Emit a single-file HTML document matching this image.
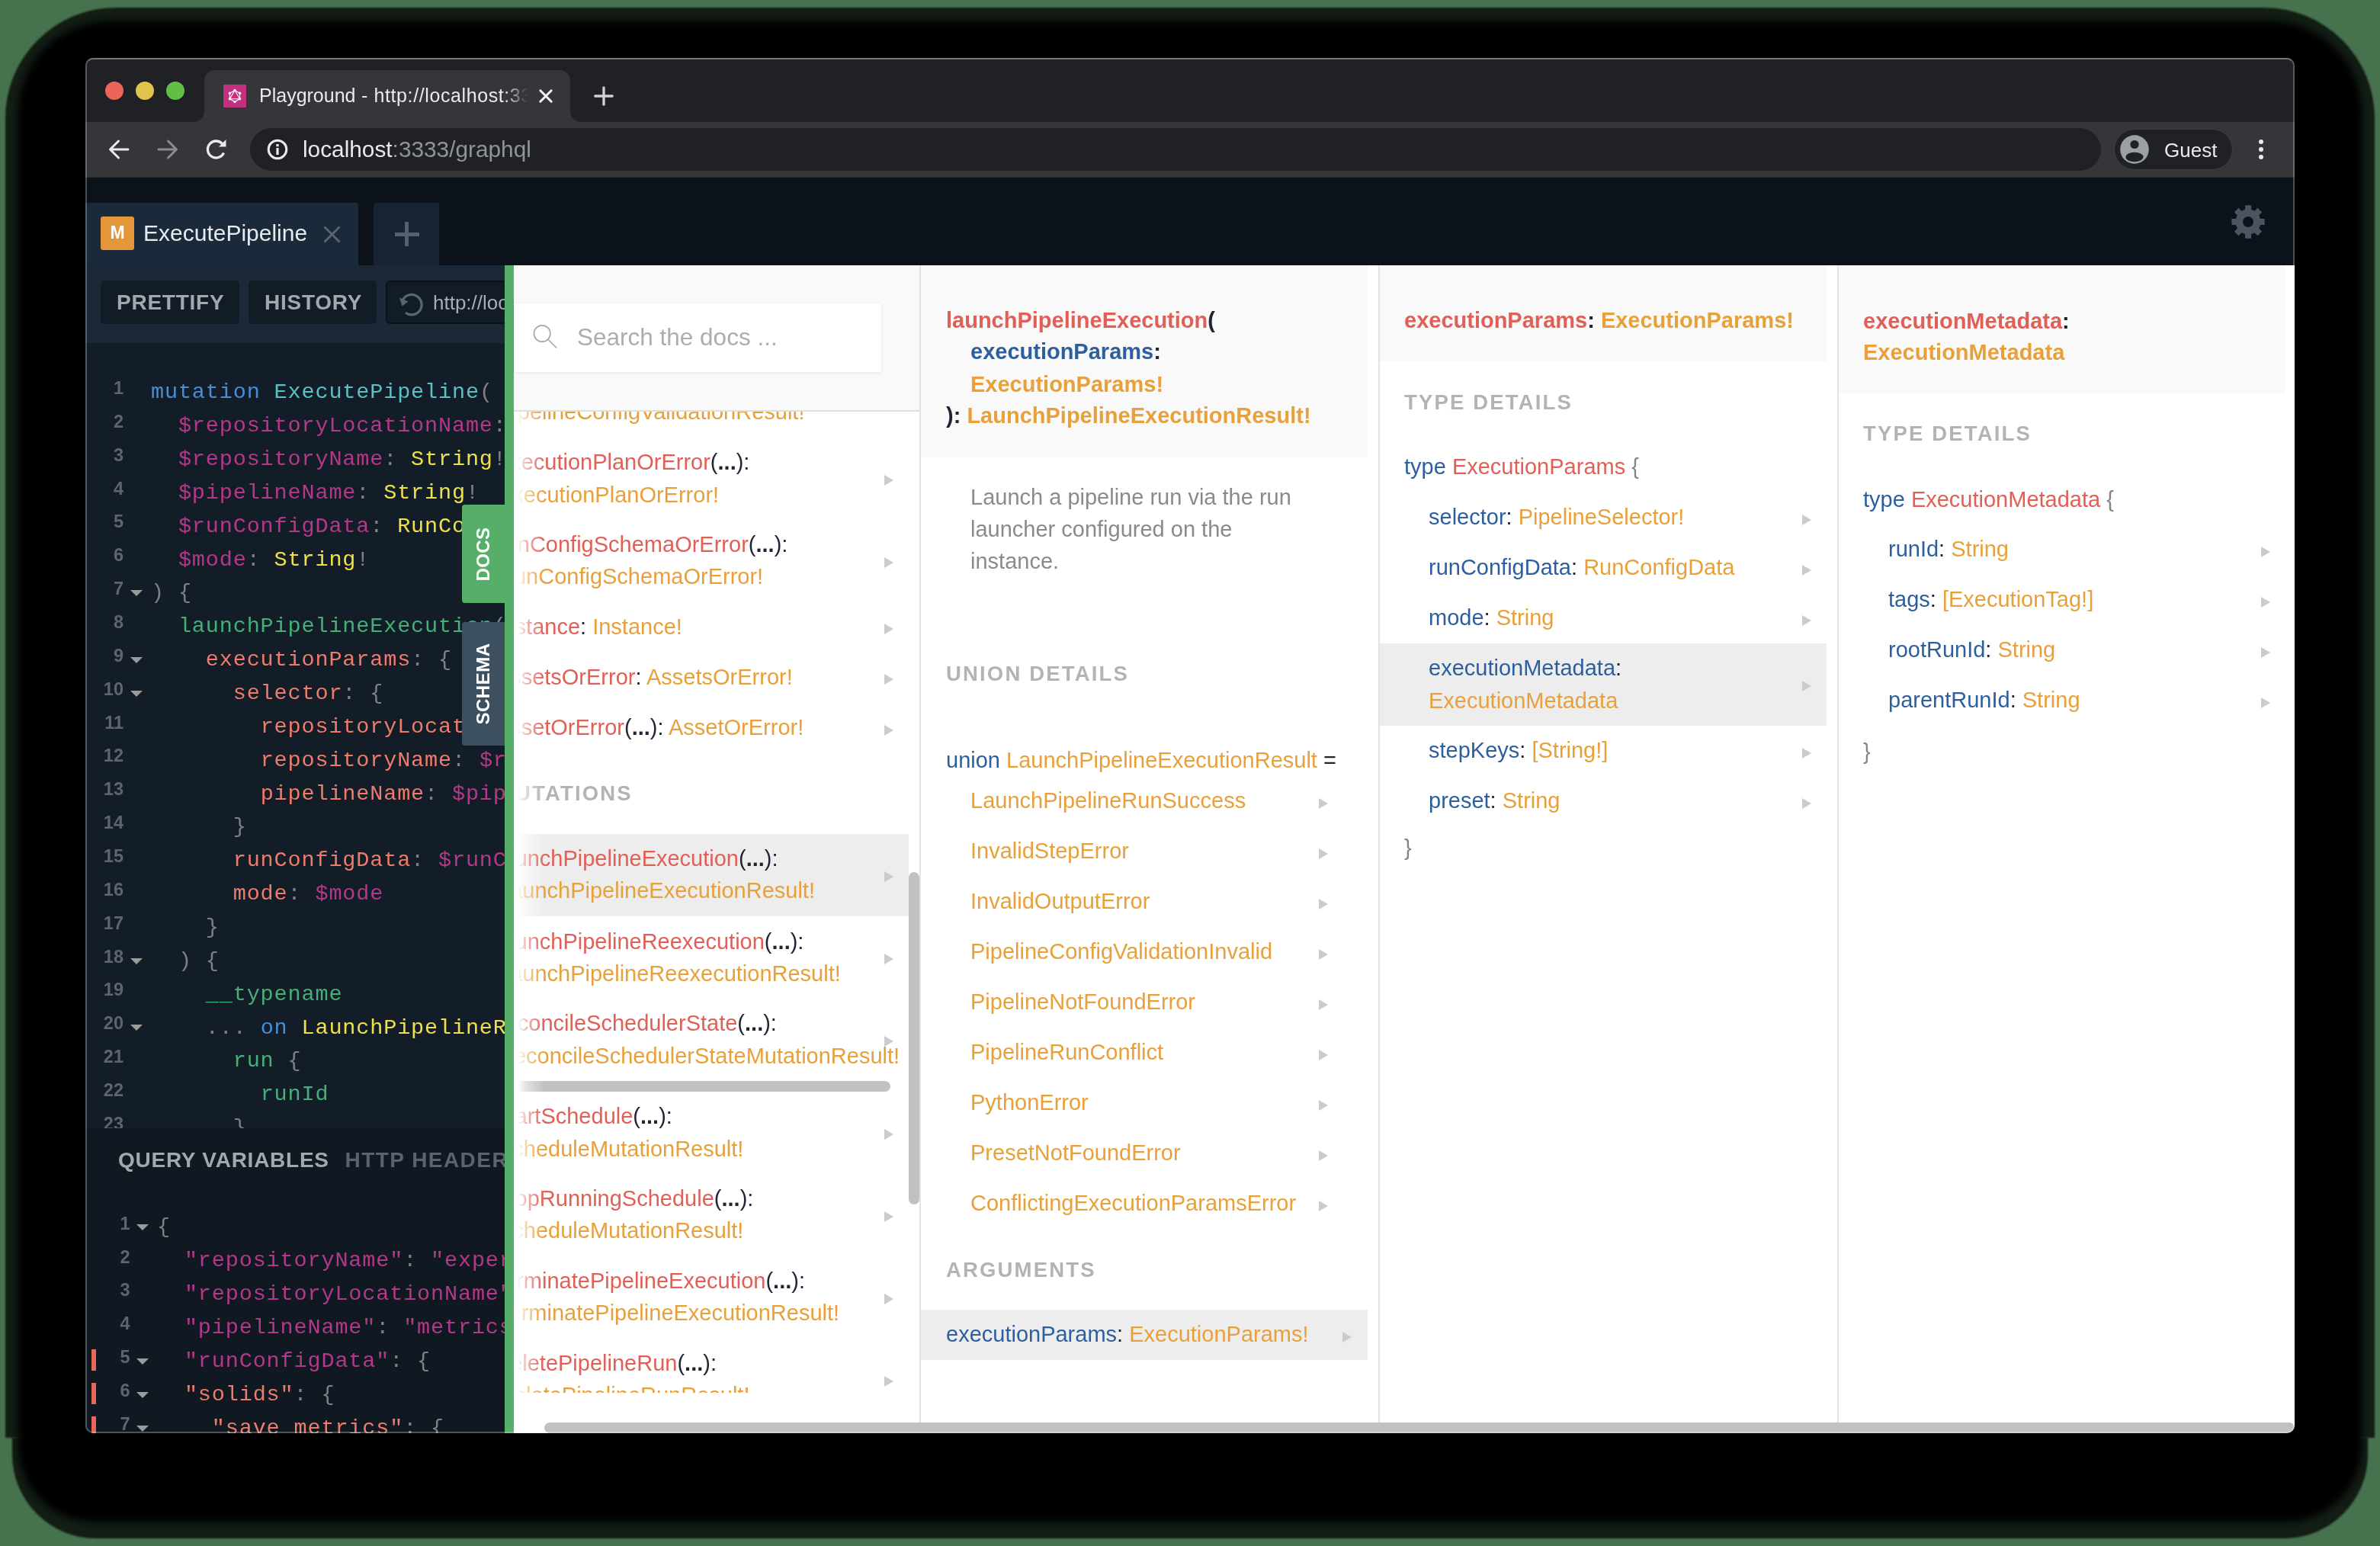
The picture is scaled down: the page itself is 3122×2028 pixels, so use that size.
<!DOCTYPE html>
<html><head><meta charset="utf-8"><title>Playground</title>
<style>
html,body{margin:0;padding:0;}
body{width:3122px;height:2028px;position:relative;overflow:hidden;background:#47724e;font-family:'Liberation Sans', sans-serif;}
</style></head><body>
<div style="position:absolute;left:7px;top:10px;width:3108px;height:1876px;border-radius:145px 145px 0 0;background:rgba(0,0,0,0.74);filter:blur(1px)"></div>
<div style="position:absolute;left:16px;top:1886px;width:3090px;height:132px;border-radius:0 0 110px 110px;background:rgba(0,0,0,0.74);filter:blur(1px)"></div>
<div style="position:absolute;left:24px;top:28px;width:3074px;height:1968px;border-radius:120px 120px 100px 100px;background:#000;filter:blur(5px)"></div>
<div style="position:absolute;left:112px;top:76px;width:2898px;height:1804px;border-radius:10px;overflow:hidden;background:#202124">
<div style="position:absolute;left:-112px;top:-76px;width:3122px;height:2028px;will-change:transform">
<div style="position:absolute;left:112px;top:76px;width:2898px;height:84px;background:#202124;"></div>
<div style="position:absolute;left:268px;top:92px;width:480px;height:68px;background:#35363a;border-radius:14px 14px 0 0"></div>
<div style="position:absolute;left:254px;top:146px;width:14px;height:14px;background:#35363a;"></div>
<div style="position:absolute;left:254px;top:146px;width:14px;height:14px;background:#202124;border-bottom-right-radius:14px"></div>
<div style="position:absolute;left:748px;top:146px;width:14px;height:14px;background:#35363a;"></div>
<div style="position:absolute;left:748px;top:146px;width:14px;height:14px;background:#202124;border-bottom-left-radius:14px"></div>
<div style="position:absolute;left:138px;top:107px;width:24px;height:24px;background:#ec6559;border-radius:50%"></div>
<div style="position:absolute;left:178px;top:107px;width:24px;height:24px;background:#e0c34a;border-radius:50%"></div>
<div style="position:absolute;left:218px;top:107px;width:24px;height:24px;background:#64bd46;border-radius:50%"></div>
<svg style="position:absolute;left:293px;top:111px" width="30" height="30" viewBox="0 0 30 30">
<rect width="30" height="30" fill="#c2307f"/>
<g stroke="#fff" stroke-width="1.1" fill="none"><polygon points="15.00,7.40 21.58,11.20 21.58,18.80 15.00,22.60 8.42,18.80 8.42,11.20"/><polygon points="15.00,7.40 21.58,18.80 8.42,18.80"/></g>
<g fill="#fff"><circle cx="15.00" cy="7.40" r="1.7"/><circle cx="21.58" cy="11.20" r="1.7"/><circle cx="21.58" cy="18.80" r="1.7"/><circle cx="15.00" cy="22.60" r="1.7"/><circle cx="8.42" cy="18.80" r="1.7"/><circle cx="8.42" cy="11.20" r="1.7"/></g></svg>
<div style="position:absolute;left:340px;top:100px;width:375px;height:50px;overflow:hidden;-webkit-mask-image:linear-gradient(to right,#000 322px,transparent 352px)">
<div style="position:absolute;left:-340px;top:-100px;width:1000px;height:200px">
<div style="position:absolute;left:340px;top:113.35px;font-family:Liberation Sans,sans-serif;font-size:25px;line-height:25px;white-space:pre;color:#e8eaed">Playground<span style="letter-spacing:0.6px"> - http://localhost:3333/graphql</span></div>
</div></div>
<svg style="position:absolute;left:704px;top:114px" width="24" height="24" viewBox="0 0 24 24"><path d="M4.8 4.8 L19.2 19.2 M19.2 4.8 L4.8 19.2" stroke="#f1f3f4" stroke-width="3" stroke-linecap="round"/></svg>
<svg style="position:absolute;left:779px;top:113px" width="26" height="26" viewBox="0 0 26 26"><path d="M13 1.8 V24.2 M1.8 13 H24.2" stroke="#d0d2d5" stroke-width="3.3" stroke-linecap="round"/></svg>
<div style="position:absolute;left:112px;top:160px;width:2898px;height:73px;background:#35363a;"></div>
<div style="position:absolute;left:112px;top:232px;width:2898px;height:1px;background:#2b2c30;"></div>
<svg style="position:absolute;left:140px;top:180px" width="32" height="32" viewBox="0 0 32 32"><path d="M28 16 H5 M15.5 5 L4.5 16 L15.5 27" stroke="#e8eaed" stroke-width="3" fill="none" stroke-linecap="round" stroke-linejoin="round"/></svg>
<svg style="position:absolute;left:204px;top:180px" width="32" height="32" viewBox="0 0 32 32"><path d="M4 16 H27 M16.5 5 L27.5 16 L16.5 27" stroke="#8b8c8f" stroke-width="3" fill="none" stroke-linecap="round" stroke-linejoin="round"/></svg>
<svg style="position:absolute;left:268px;top:180px" width="32" height="32" viewBox="0 0 32 32">
<path d="M25.5 20.5 A11 11 0 1 1 23.5 8.5" stroke="#e8eaed" stroke-width="3.3" fill="none"/>
<path d="M19 12.5 L28.5 12.5 L28.5 3 Z" fill="#e8eaed"/></svg>
<div style="position:absolute;left:328px;top:168px;width:2428px;height:56px;background:#202124;border-radius:28px"></div>
<svg style="position:absolute;left:349px;top:181px" width="30" height="30" viewBox="0 0 30 30">
<circle cx="15" cy="15" r="11.8" stroke="#e8eaed" stroke-width="3" fill="none"/>
<rect x="13.4" y="13" width="3.2" height="9" fill="#e8eaed"/><rect x="13.4" y="8" width="3.2" height="3.2" fill="#e8eaed"/></svg>
<div style="position:absolute;left:397.0px;top:180.9px;font-family:'Liberation Sans', sans-serif;font-size:29.8px;line-height:29.8px;font-weight:400;white-space:pre;"><span style="color:#e8eaed">localhost</span><span style="color:#909398">:3333/graphql</span></div>
<div style="position:absolute;left:2773px;top:169px;width:156px;height:54px;background:#202124;border-radius:27px;box-sizing:border-box;border:1.5px solid #3d3e42"></div>
<svg style="position:absolute;left:2781px;top:177px" width="38" height="38" viewBox="0 0 38 38">
<defs><clipPath id="av"><circle cx="19" cy="19" r="18.8"/></clipPath></defs>
<circle cx="19" cy="19" r="18.8" fill="#9aa0a6"/>
<g clip-path="url(#av)" fill="#202124"><circle cx="19" cy="12.5" r="5.6"/><ellipse cx="19" cy="29" rx="11.5" ry="6.2"/></g></svg>
<div style="position:absolute;left:2839.0px;top:183.8px;font-family:'Liberation Sans', sans-serif;font-size:26px;line-height:26px;font-weight:400;white-space:pre;"><span style="color:#e8eaed">Guest</span></div>
<div style="position:absolute;left:2962.7px;top:182.60000000000002px;width:6.4px;height:6.4px;background:#e8eaed;border-radius:50%"></div>
<div style="position:absolute;left:2962.7px;top:192.70000000000002px;width:6.4px;height:6.4px;background:#e8eaed;border-radius:50%"></div>
<div style="position:absolute;left:2962.7px;top:202.8px;width:6.4px;height:6.4px;background:#e8eaed;border-radius:50%"></div>
<div style="position:absolute;left:112px;top:233px;width:2898px;height:115px;background:#0b1219;"></div>
<div style="position:absolute;left:112px;top:266px;width:358px;height:82px;background:#1b2a3a;border-top-right-radius:3px"></div>
<div style="position:absolute;left:132px;top:284px;width:44px;height:44px;background:#e3963a;border-radius:3px"></div>
<div style="position:absolute;left:144.5px;top:294.4px;font-family:'Liberation Sans', sans-serif;font-size:23px;line-height:23px;font-weight:700;white-space:pre;"><span style="color:#ffffff">M</span></div>
<div style="position:absolute;left:188.0px;top:290.5px;font-family:'Liberation Sans', sans-serif;font-size:30px;line-height:30px;font-weight:400;white-space:pre;"><span style="color:#e8ebee">ExecutePipeline</span></div>
<svg style="position:absolute;left:424px;top:296px" width="23" height="23" viewBox="0 0 23 23"><path d="M1.5 1.5 L21.5 21.5 M21.5 1.5 L1.5 21.5" stroke="#5d6670" stroke-width="2.6"/></svg>
<div style="position:absolute;left:490px;top:266px;width:86px;height:82px;background:#172331;border-radius:3px 3px 0 0"></div>
<div style="position:absolute;left:517.5px;top:304.5px;width:32px;height:5px;background:#56616d;"></div>
<div style="position:absolute;left:531px;top:291px;width:5px;height:32px;background:#56616d;"></div>
<svg style="position:absolute;left:0;top:0" width="3122" height="400"><polygon points="2945.00,275.51 2945.00,269.37 2953.00,269.37 2953.00,275.51 2957.13,277.22 2961.47,272.87 2967.13,278.53 2962.78,282.87 2964.49,287.00 2970.63,287.00 2970.63,295.00 2964.49,295.00 2962.78,299.13 2967.13,303.47 2961.47,309.13 2957.13,304.78 2953.00,306.49 2953.00,312.63 2945.00,312.63 2945.00,306.49 2940.87,304.78 2936.53,309.13 2930.87,303.47 2935.22,299.13 2933.51,295.00 2927.37,295.00 2927.37,287.00 2933.51,287.00 2935.22,282.87 2930.87,278.53 2936.53,272.87 2940.87,277.22" fill="#4a5561"/><circle cx="2949" cy="291" r="16.5" fill="#4a5561"/><circle cx="2949" cy="291" r="7" fill="#0b1219"/></svg>
<div style="position:absolute;left:112px;top:348px;width:550px;height:102px;background:#1b2838;"></div>
<div style="position:absolute;left:132px;top:368px;width:182px;height:57px;background:#121c27;border-radius:5px"></div>
<div style="position:absolute;left:153.0px;top:382.7px;font-family:'Liberation Sans', sans-serif;font-size:28px;line-height:28px;font-weight:700;white-space:pre;letter-spacing:0.75px"><span style="color:#a3a8ae">PRETTIFY</span></div>
<div style="position:absolute;left:326px;top:368px;width:168px;height:57px;background:#121c27;border-radius:5px"></div>
<div style="position:absolute;left:347.0px;top:382.7px;font-family:'Liberation Sans', sans-serif;font-size:28px;line-height:28px;font-weight:700;white-space:pre;letter-spacing:0.75px"><span style="color:#a3a8ae">HISTORY</span></div>
<div style="position:absolute;left:506px;top:368px;width:400px;height:57px;background:#121c27;border-radius:6px;box-sizing:border-box;border:2px solid #0a1118"></div>
<svg style="position:absolute;left:520px;top:380px" width="36" height="36" viewBox="0 0 36 36">
<path d="M8.2 13.5 A13.2 13.2 0 1 1 12 30.3" stroke="#5c6671" stroke-width="3.2" fill="none"/>
<path d="M4 10.5 L7.5 21.5 L15.5 15.5 Z" fill="#5c6671"/></svg>
<div style="position:absolute;left:568.0px;top:383.9px;font-family:'Liberation Sans', sans-serif;font-size:26px;line-height:26px;font-weight:400;white-space:pre;"><span style="color:#a9adb2">http://localhost:3333/graphql</span></div>
<div style="position:absolute;left:112px;top:450px;width:550px;height:1030px;background:#131d28;"></div>
<div style="position:absolute;left:112px;top:450px;width:550px;height:1030px;overflow:hidden">
<div style="position:absolute;left:-112px;top:-450px;width:1000px;height:2000px">
<div style="position:absolute;left:198.0px;top:501.2px;font-family:'Liberation Mono', monospace;font-size:28.5px;line-height:28.5px;font-weight:400;white-space:pre;letter-spacing:0.85px"><span style="color:#4a8cd6">mutation</span><span style="color:#7b8189"> </span><span style="color:#58c2c5">ExecutePipeline</span><span style="color:#7b8189">(</span></div>
<div style="position:absolute;left:112.0px;top:497.9px;font-family:'Liberation Sans', sans-serif;font-size:23.5px;line-height:23.5px;font-weight:700;white-space:pre;width:50px;text-align:right"><span style="color:#5c6570">1</span></div>
<div style="position:absolute;left:198.0px;top:545.1px;font-family:'Liberation Mono', monospace;font-size:28.5px;line-height:28.5px;font-weight:400;white-space:pre;letter-spacing:0.85px"><span style="color:#7b8189">  </span><span style="color:#b3388a">$repositoryLocationName</span><span style="color:#7b8189">: </span><span style="color:#efe04a">String</span><span style="color:#7b8189">!</span></div>
<div style="position:absolute;left:112.0px;top:541.8px;font-family:'Liberation Sans', sans-serif;font-size:23.5px;line-height:23.5px;font-weight:700;white-space:pre;width:50px;text-align:right"><span style="color:#5c6570">2</span></div>
<div style="position:absolute;left:198.0px;top:589.0px;font-family:'Liberation Mono', monospace;font-size:28.5px;line-height:28.5px;font-weight:400;white-space:pre;letter-spacing:0.85px"><span style="color:#7b8189">  </span><span style="color:#b3388a">$repositoryName</span><span style="color:#7b8189">: </span><span style="color:#efe04a">String</span><span style="color:#7b8189">!</span></div>
<div style="position:absolute;left:112.0px;top:585.6px;font-family:'Liberation Sans', sans-serif;font-size:23.5px;line-height:23.5px;font-weight:700;white-space:pre;width:50px;text-align:right"><span style="color:#5c6570">3</span></div>
<div style="position:absolute;left:198.0px;top:632.8px;font-family:'Liberation Mono', monospace;font-size:28.5px;line-height:28.5px;font-weight:400;white-space:pre;letter-spacing:0.85px"><span style="color:#7b8189">  </span><span style="color:#b3388a">$pipelineName</span><span style="color:#7b8189">: </span><span style="color:#efe04a">String</span><span style="color:#7b8189">!</span></div>
<div style="position:absolute;left:112.0px;top:629.5px;font-family:'Liberation Sans', sans-serif;font-size:23.5px;line-height:23.5px;font-weight:700;white-space:pre;width:50px;text-align:right"><span style="color:#5c6570">4</span></div>
<div style="position:absolute;left:198.0px;top:676.7px;font-family:'Liberation Mono', monospace;font-size:28.5px;line-height:28.5px;font-weight:400;white-space:pre;letter-spacing:0.85px"><span style="color:#7b8189">  </span><span style="color:#b3388a">$runConfigData</span><span style="color:#7b8189">: </span><span style="color:#efe04a">RunConfigData</span><span style="color:#7b8189">!</span></div>
<div style="position:absolute;left:112.0px;top:673.4px;font-family:'Liberation Sans', sans-serif;font-size:23.5px;line-height:23.5px;font-weight:700;white-space:pre;width:50px;text-align:right"><span style="color:#5c6570">5</span></div>
<div style="position:absolute;left:198.0px;top:720.5px;font-family:'Liberation Mono', monospace;font-size:28.5px;line-height:28.5px;font-weight:400;white-space:pre;letter-spacing:0.85px"><span style="color:#7b8189">  </span><span style="color:#b3388a">$mode</span><span style="color:#7b8189">: </span><span style="color:#efe04a">String</span><span style="color:#7b8189">!</span></div>
<div style="position:absolute;left:112.0px;top:717.2px;font-family:'Liberation Sans', sans-serif;font-size:23.5px;line-height:23.5px;font-weight:700;white-space:pre;width:50px;text-align:right"><span style="color:#5c6570">6</span></div>
<div style="position:absolute;left:198.0px;top:764.4px;font-family:'Liberation Mono', monospace;font-size:28.5px;line-height:28.5px;font-weight:400;white-space:pre;letter-spacing:0.85px"><span style="color:#7b8189">) {</span></div>
<div style="position:absolute;left:112.0px;top:761.1px;font-family:'Liberation Sans', sans-serif;font-size:23.5px;line-height:23.5px;font-weight:700;white-space:pre;width:50px;text-align:right"><span style="color:#5c6570">7</span></div>
<div style="position:absolute;left:171.0px;top:774.1px;width:0;height:0;border-left:8.0px solid transparent;border-right:8.0px solid transparent;border-top:8.5px solid #9b9b9b"></div>
<div style="position:absolute;left:198.0px;top:808.3px;font-family:'Liberation Mono', monospace;font-size:28.5px;line-height:28.5px;font-weight:400;white-space:pre;letter-spacing:0.85px"><span style="color:#7b8189">  </span><span style="color:#44b077">launchPipelineExecution</span><span style="color:#7b8189">(</span></div>
<div style="position:absolute;left:112.0px;top:804.9px;font-family:'Liberation Sans', sans-serif;font-size:23.5px;line-height:23.5px;font-weight:700;white-space:pre;width:50px;text-align:right"><span style="color:#5c6570">8</span></div>
<div style="position:absolute;left:198.0px;top:852.1px;font-family:'Liberation Mono', monospace;font-size:28.5px;line-height:28.5px;font-weight:400;white-space:pre;letter-spacing:0.85px"><span style="color:#7b8189">    </span><span style="color:#ee7b6b">executionParams</span><span style="color:#7b8189">: {</span></div>
<div style="position:absolute;left:112.0px;top:848.8px;font-family:'Liberation Sans', sans-serif;font-size:23.5px;line-height:23.5px;font-weight:700;white-space:pre;width:50px;text-align:right"><span style="color:#5c6570">9</span></div>
<div style="position:absolute;left:171.0px;top:861.8px;width:0;height:0;border-left:8.0px solid transparent;border-right:8.0px solid transparent;border-top:8.5px solid #9b9b9b"></div>
<div style="position:absolute;left:198.0px;top:896.0px;font-family:'Liberation Mono', monospace;font-size:28.5px;line-height:28.5px;font-weight:400;white-space:pre;letter-spacing:0.85px"><span style="color:#7b8189">      </span><span style="color:#ee7b6b">selector</span><span style="color:#7b8189">: {</span></div>
<div style="position:absolute;left:112.0px;top:892.7px;font-family:'Liberation Sans', sans-serif;font-size:23.5px;line-height:23.5px;font-weight:700;white-space:pre;width:50px;text-align:right"><span style="color:#5c6570">10</span></div>
<div style="position:absolute;left:171.0px;top:905.7px;width:0;height:0;border-left:8.0px solid transparent;border-right:8.0px solid transparent;border-top:8.5px solid #9b9b9b"></div>
<div style="position:absolute;left:198.0px;top:939.8px;font-family:'Liberation Mono', monospace;font-size:28.5px;line-height:28.5px;font-weight:400;white-space:pre;letter-spacing:0.85px"><span style="color:#7b8189">        </span><span style="color:#ee7b6b">repositoryLocationName</span><span style="color:#7b8189">: </span><span style="color:#b3388a">$repositoryLocationName</span></div>
<div style="position:absolute;left:112.0px;top:936.5px;font-family:'Liberation Sans', sans-serif;font-size:23.5px;line-height:23.5px;font-weight:700;white-space:pre;width:50px;text-align:right"><span style="color:#5c6570">11</span></div>
<div style="position:absolute;left:198.0px;top:983.7px;font-family:'Liberation Mono', monospace;font-size:28.5px;line-height:28.5px;font-weight:400;white-space:pre;letter-spacing:0.85px"><span style="color:#7b8189">        </span><span style="color:#ee7b6b">repositoryName</span><span style="color:#7b8189">: </span><span style="color:#b3388a">$repositoryName</span></div>
<div style="position:absolute;left:112.0px;top:980.4px;font-family:'Liberation Sans', sans-serif;font-size:23.5px;line-height:23.5px;font-weight:700;white-space:pre;width:50px;text-align:right"><span style="color:#5c6570">12</span></div>
<div style="position:absolute;left:198.0px;top:1027.6px;font-family:'Liberation Mono', monospace;font-size:28.5px;line-height:28.5px;font-weight:400;white-space:pre;letter-spacing:0.85px"><span style="color:#7b8189">        </span><span style="color:#ee7b6b">pipelineName</span><span style="color:#7b8189">: </span><span style="color:#b3388a">$pipelineName</span></div>
<div style="position:absolute;left:112.0px;top:1024.2px;font-family:'Liberation Sans', sans-serif;font-size:23.5px;line-height:23.5px;font-weight:700;white-space:pre;width:50px;text-align:right"><span style="color:#5c6570">13</span></div>
<div style="position:absolute;left:198.0px;top:1071.4px;font-family:'Liberation Mono', monospace;font-size:28.5px;line-height:28.5px;font-weight:400;white-space:pre;letter-spacing:0.85px"><span style="color:#7b8189">      }</span></div>
<div style="position:absolute;left:112.0px;top:1068.1px;font-family:'Liberation Sans', sans-serif;font-size:23.5px;line-height:23.5px;font-weight:700;white-space:pre;width:50px;text-align:right"><span style="color:#5c6570">14</span></div>
<div style="position:absolute;left:198.0px;top:1115.3px;font-family:'Liberation Mono', monospace;font-size:28.5px;line-height:28.5px;font-weight:400;white-space:pre;letter-spacing:0.85px"><span style="color:#7b8189">      </span><span style="color:#ee7b6b">runConfigData</span><span style="color:#7b8189">: </span><span style="color:#b3388a">$runConfigData</span></div>
<div style="position:absolute;left:112.0px;top:1112.0px;font-family:'Liberation Sans', sans-serif;font-size:23.5px;line-height:23.5px;font-weight:700;white-space:pre;width:50px;text-align:right"><span style="color:#5c6570">15</span></div>
<div style="position:absolute;left:198.0px;top:1159.1px;font-family:'Liberation Mono', monospace;font-size:28.5px;line-height:28.5px;font-weight:400;white-space:pre;letter-spacing:0.85px"><span style="color:#7b8189">      </span><span style="color:#ee7b6b">mode</span><span style="color:#7b8189">: </span><span style="color:#b3388a">$mode</span></div>
<div style="position:absolute;left:112.0px;top:1155.8px;font-family:'Liberation Sans', sans-serif;font-size:23.5px;line-height:23.5px;font-weight:700;white-space:pre;width:50px;text-align:right"><span style="color:#5c6570">16</span></div>
<div style="position:absolute;left:198.0px;top:1203.0px;font-family:'Liberation Mono', monospace;font-size:28.5px;line-height:28.5px;font-weight:400;white-space:pre;letter-spacing:0.85px"><span style="color:#7b8189">    }</span></div>
<div style="position:absolute;left:112.0px;top:1199.7px;font-family:'Liberation Sans', sans-serif;font-size:23.5px;line-height:23.5px;font-weight:700;white-space:pre;width:50px;text-align:right"><span style="color:#5c6570">17</span></div>
<div style="position:absolute;left:198.0px;top:1246.9px;font-family:'Liberation Mono', monospace;font-size:28.5px;line-height:28.5px;font-weight:400;white-space:pre;letter-spacing:0.85px"><span style="color:#7b8189">  ) {</span></div>
<div style="position:absolute;left:112.0px;top:1243.5px;font-family:'Liberation Sans', sans-serif;font-size:23.5px;line-height:23.5px;font-weight:700;white-space:pre;width:50px;text-align:right"><span style="color:#5c6570">18</span></div>
<div style="position:absolute;left:171.0px;top:1256.6px;width:0;height:0;border-left:8.0px solid transparent;border-right:8.0px solid transparent;border-top:8.5px solid #9b9b9b"></div>
<div style="position:absolute;left:198.0px;top:1290.7px;font-family:'Liberation Mono', monospace;font-size:28.5px;line-height:28.5px;font-weight:400;white-space:pre;letter-spacing:0.85px"><span style="color:#7b8189">    </span><span style="color:#44b077">__typename</span></div>
<div style="position:absolute;left:112.0px;top:1287.4px;font-family:'Liberation Sans', sans-serif;font-size:23.5px;line-height:23.5px;font-weight:700;white-space:pre;width:50px;text-align:right"><span style="color:#5c6570">19</span></div>
<div style="position:absolute;left:198.0px;top:1334.6px;font-family:'Liberation Mono', monospace;font-size:28.5px;line-height:28.5px;font-weight:400;white-space:pre;letter-spacing:0.85px"><span style="color:#7b8189">    ... </span><span style="color:#4a8cd6">on</span><span style="color:#7b8189"> </span><span style="color:#efe04a">LaunchPipelineRunSuccess</span><span style="color:#7b8189"> {</span></div>
<div style="position:absolute;left:112.0px;top:1331.3px;font-family:'Liberation Sans', sans-serif;font-size:23.5px;line-height:23.5px;font-weight:700;white-space:pre;width:50px;text-align:right"><span style="color:#5c6570">20</span></div>
<div style="position:absolute;left:171.0px;top:1344.3px;width:0;height:0;border-left:8.0px solid transparent;border-right:8.0px solid transparent;border-top:8.5px solid #9b9b9b"></div>
<div style="position:absolute;left:198.0px;top:1378.4px;font-family:'Liberation Mono', monospace;font-size:28.5px;line-height:28.5px;font-weight:400;white-space:pre;letter-spacing:0.85px"><span style="color:#7b8189">      </span><span style="color:#44b077">run</span><span style="color:#7b8189"> {</span></div>
<div style="position:absolute;left:112.0px;top:1375.1px;font-family:'Liberation Sans', sans-serif;font-size:23.5px;line-height:23.5px;font-weight:700;white-space:pre;width:50px;text-align:right"><span style="color:#5c6570">21</span></div>
<div style="position:absolute;left:198.0px;top:1422.3px;font-family:'Liberation Mono', monospace;font-size:28.5px;line-height:28.5px;font-weight:400;white-space:pre;letter-spacing:0.85px"><span style="color:#7b8189">        </span><span style="color:#44b077">runId</span></div>
<div style="position:absolute;left:112.0px;top:1419.0px;font-family:'Liberation Sans', sans-serif;font-size:23.5px;line-height:23.5px;font-weight:700;white-space:pre;width:50px;text-align:right"><span style="color:#5c6570">22</span></div>
<div style="position:absolute;left:198.0px;top:1466.2px;font-family:'Liberation Mono', monospace;font-size:28.5px;line-height:28.5px;font-weight:400;white-space:pre;letter-spacing:0.85px"><span style="color:#7b8189">      }</span></div>
<div style="position:absolute;left:112.0px;top:1462.8px;font-family:'Liberation Sans', sans-serif;font-size:23.5px;line-height:23.5px;font-weight:700;white-space:pre;width:50px;text-align:right"><span style="color:#5c6570">23</span></div>
</div></div>
<div style="position:absolute;left:112px;top:1480px;width:550px;height:400px;background:#101922;"></div>
<div style="position:absolute;left:155.0px;top:1507.8px;font-family:'Liberation Sans', sans-serif;font-size:28px;line-height:28px;font-weight:700;white-space:pre;letter-spacing:0.75px"><span style="color:#a3a8ae">QUERY VARIABLES</span></div>
<div style="position:absolute;left:452.5px;top:1507.8px;font-family:'Liberation Sans', sans-serif;font-size:28px;line-height:28px;font-weight:700;white-space:pre;letter-spacing:1.45px"><span style="color:#5b646e">HTTP HEADERS</span></div>
<div style="position:absolute;left:206.0px;top:1595.8px;font-family:'Liberation Mono', monospace;font-size:28.5px;line-height:28.5px;font-weight:400;white-space:pre;letter-spacing:0.85px"><span style="color:#7b8189">{</span></div>
<div style="position:absolute;left:120.5px;top:1593.5px;font-family:'Liberation Sans', sans-serif;font-size:23.5px;line-height:23.5px;font-weight:700;white-space:pre;width:50px;text-align:right"><span style="color:#5c6570">1</span></div>
<div style="position:absolute;left:179.0px;top:1606.3px;width:0;height:0;border-left:8.0px solid transparent;border-right:8.0px solid transparent;border-top:8.5px solid #9b9b9b"></div>
<div style="position:absolute;left:206.0px;top:1639.8px;font-family:'Liberation Mono', monospace;font-size:28.5px;line-height:28.5px;font-weight:400;white-space:pre;letter-spacing:0.85px"><span style="color:#7b8189">  </span><span style="color:#b3388a">"repositoryName"</span><span style="color:#7b8189">: </span><span style="color:#b3388a">"experimental_repository"</span><span style="color:#7b8189">,</span></div>
<div style="position:absolute;left:120.5px;top:1637.5px;font-family:'Liberation Sans', sans-serif;font-size:23.5px;line-height:23.5px;font-weight:700;white-space:pre;width:50px;text-align:right"><span style="color:#5c6570">2</span></div>
<div style="position:absolute;left:206.0px;top:1683.7px;font-family:'Liberation Mono', monospace;font-size:28.5px;line-height:28.5px;font-weight:400;white-space:pre;letter-spacing:0.85px"><span style="color:#7b8189">  </span><span style="color:#b3388a">"repositoryLocationName"</span><span style="color:#7b8189">: </span><span style="color:#b3388a">"experimental_repository"</span><span style="color:#7b8189">,</span></div>
<div style="position:absolute;left:120.5px;top:1681.4px;font-family:'Liberation Sans', sans-serif;font-size:23.5px;line-height:23.5px;font-weight:700;white-space:pre;width:50px;text-align:right"><span style="color:#5c6570">3</span></div>
<div style="position:absolute;left:206.0px;top:1727.7px;font-family:'Liberation Mono', monospace;font-size:28.5px;line-height:28.5px;font-weight:400;white-space:pre;letter-spacing:0.85px"><span style="color:#7b8189">  </span><span style="color:#b3388a">"pipelineName"</span><span style="color:#7b8189">: </span><span style="color:#b3388a">"metrics_pipeline"</span><span style="color:#7b8189">,</span></div>
<div style="position:absolute;left:120.5px;top:1725.4px;font-family:'Liberation Sans', sans-serif;font-size:23.5px;line-height:23.5px;font-weight:700;white-space:pre;width:50px;text-align:right"><span style="color:#5c6570">4</span></div>
<div style="position:absolute;left:206.0px;top:1771.6px;font-family:'Liberation Mono', monospace;font-size:28.5px;line-height:28.5px;font-weight:400;white-space:pre;letter-spacing:0.85px"><span style="color:#7b8189">  </span><span style="color:#b3388a">"runConfigData"</span><span style="color:#7b8189">: {</span></div>
<div style="position:absolute;left:120.5px;top:1769.3px;font-family:'Liberation Sans', sans-serif;font-size:23.5px;line-height:23.5px;font-weight:700;white-space:pre;width:50px;text-align:right"><span style="color:#5c6570">5</span></div>
<div style="position:absolute;left:179.0px;top:1782.1px;width:0;height:0;border-left:8.0px solid transparent;border-right:8.0px solid transparent;border-top:8.5px solid #9b9b9b"></div>
<div style="position:absolute;left:120px;top:1770.3px;width:6px;height:28px;background:#e8665a;"></div>
<div style="position:absolute;left:206.0px;top:1815.6px;font-family:'Liberation Mono', monospace;font-size:28.5px;line-height:28.5px;font-weight:400;white-space:pre;letter-spacing:0.85px"><span style="color:#7b8189">  </span><span style="color:#ee7b6b">"solids"</span><span style="color:#7b8189">: {</span></div>
<div style="position:absolute;left:120.5px;top:1813.3px;font-family:'Liberation Sans', sans-serif;font-size:23.5px;line-height:23.5px;font-weight:700;white-space:pre;width:50px;text-align:right"><span style="color:#5c6570">6</span></div>
<div style="position:absolute;left:179.0px;top:1826.1px;width:0;height:0;border-left:8.0px solid transparent;border-right:8.0px solid transparent;border-top:8.5px solid #9b9b9b"></div>
<div style="position:absolute;left:120px;top:1814.25px;width:6px;height:28px;background:#e8665a;"></div>
<div style="position:absolute;left:206.0px;top:1859.5px;font-family:'Liberation Mono', monospace;font-size:28.5px;line-height:28.5px;font-weight:400;white-space:pre;letter-spacing:0.85px"><span style="color:#7b8189">    </span><span style="color:#ee7b6b">"save_metrics"</span><span style="color:#7b8189">: {</span></div>
<div style="position:absolute;left:120.5px;top:1857.2px;font-family:'Liberation Sans', sans-serif;font-size:23.5px;line-height:23.5px;font-weight:700;white-space:pre;width:50px;text-align:right"><span style="color:#5c6570">7</span></div>
<div style="position:absolute;left:179.0px;top:1870.0px;width:0;height:0;border-left:8.0px solid transparent;border-right:8.0px solid transparent;border-top:8.5px solid #9b9b9b"></div>
<div style="position:absolute;left:120px;top:1858.2px;width:6px;height:28px;background:#e8665a;"></div>
<div style="position:absolute;left:606px;top:662px;width:60px;height:129px;background:#57ae68;border-radius:4px 0 0 4px"></div>
<div style="position:absolute;left:606px;top:816px;width:60px;height:161.5px;background:#3d5060;border-radius:4px 0 0 4px"></div>
<div style="position:absolute;left:634px;top:726.5px;width:0;height:0"><div style="position:absolute;left:-60px;top:-12px;width:120px;height:24px;transform:rotate(-90deg);text-align:center;font:700 24px/24px 'Liberation Sans',sans-serif;letter-spacing:0.3px;color:#fff">DOCS</div></div>
<div style="position:absolute;left:634px;top:896.7px;width:0;height:0"><div style="position:absolute;left:-80px;top:-12px;width:160px;height:24px;transform:rotate(-90deg);text-align:center;font:700 24px/24px 'Liberation Sans',sans-serif;letter-spacing:0.5px;color:#fff">SCHEMA</div></div>
<div style="position:absolute;left:662px;top:348px;width:12px;height:1532px;background:#57ae68;"></div>
<div style="position:absolute;left:674px;top:348px;width:2336px;height:1532px;background:#ffffff;"></div>
<div style="position:absolute;left:674px;top:539px;width:532px;height:1288px;overflow:hidden">
<div style="position:absolute;left:-674px;top:-539px;width:3000px;height:3000px">
<div style="position:absolute;left:674px;top:1094px;width:518px;height:108px;background:#ededed;"></div>
<div style="position:absolute;left:653.0px;top:525.5px;font-family:'Liberation Sans', sans-serif;font-size:29px;line-height:29px;font-weight:400;white-space:pre;"><span style="color:#e8a03b">PipelineConfigValidationResult!</span></div>
<div style="position:absolute;left:653.0px;top:592.2px;font-family:'Liberation Sans', sans-serif;font-size:29px;line-height:29px;font-weight:400;white-space:pre;"><span style="color:#e06058">executionPlanOrError</span><span style="color:#1f2633">(</span><span style="color:#1f2633;font-weight:700">...</span><span style="color:#1f2633">):</span></div>
<div style="position:absolute;left:653.0px;top:634.6px;font-family:'Liberation Sans', sans-serif;font-size:29px;line-height:29px;font-weight:400;white-space:pre;"><span style="color:#e8a03b">ExecutionPlanOrError!</span></div>
<div style="position:absolute;left:1159.5px;top:623.0px;width:0;height:0;border-top:7.0px solid transparent;border-bottom:7.0px solid transparent;border-left:12px solid #cbcbcb"></div>
<div style="position:absolute;left:653.0px;top:699.5px;font-family:'Liberation Sans', sans-serif;font-size:29px;line-height:29px;font-weight:400;white-space:pre;"><span style="color:#e06058">runConfigSchemaOrError</span><span style="color:#1f2633">(</span><span style="color:#1f2633;font-weight:700">...</span><span style="color:#1f2633">):</span></div>
<div style="position:absolute;left:653.0px;top:741.9px;font-family:'Liberation Sans', sans-serif;font-size:29px;line-height:29px;font-weight:400;white-space:pre;"><span style="color:#e8a03b">RunConfigSchemaOrError!</span></div>
<div style="position:absolute;left:1159.5px;top:730.5px;width:0;height:0;border-top:7.0px solid transparent;border-bottom:7.0px solid transparent;border-left:12px solid #cbcbcb"></div>
<div style="position:absolute;left:653.0px;top:807.6px;font-family:'Liberation Sans', sans-serif;font-size:29px;line-height:29px;font-weight:400;white-space:pre;"><span style="color:#e06058">instance</span><span style="color:#1f2633">: </span><span style="color:#e8a03b">Instance!</span></div>
<div style="position:absolute;left:1159.5px;top:818.0px;width:0;height:0;border-top:7.0px solid transparent;border-bottom:7.0px solid transparent;border-left:12px solid #cbcbcb"></div>
<div style="position:absolute;left:653.0px;top:873.7px;font-family:'Liberation Sans', sans-serif;font-size:29px;line-height:29px;font-weight:400;white-space:pre;"><span style="color:#e06058">assetsOrError</span><span style="color:#1f2633">: </span><span style="color:#e8a03b">AssetsOrError!</span></div>
<div style="position:absolute;left:1159.5px;top:884.0px;width:0;height:0;border-top:7.0px solid transparent;border-bottom:7.0px solid transparent;border-left:12px solid #cbcbcb"></div>
<div style="position:absolute;left:653.0px;top:940.0px;font-family:'Liberation Sans', sans-serif;font-size:29px;line-height:29px;font-weight:400;white-space:pre;"><span style="color:#e06058">assetOrError</span><span style="color:#1f2633">(</span><span style="color:#1f2633;font-weight:700">...</span><span style="color:#1f2633">): </span><span style="color:#e8a03b">AssetOrError!</span></div>
<div style="position:absolute;left:1159.5px;top:950.5px;width:0;height:0;border-top:7.0px solid transparent;border-bottom:7.0px solid transparent;border-left:12px solid #cbcbcb"></div>
<div style="position:absolute;left:653.0px;top:1112.0px;font-family:'Liberation Sans', sans-serif;font-size:29px;line-height:29px;font-weight:400;white-space:pre;"><span style="color:#e06058">launchPipelineExecution</span><span style="color:#1f2633">(</span><span style="color:#1f2633;font-weight:700">...</span><span style="color:#1f2633">):</span></div>
<div style="position:absolute;left:653.0px;top:1154.4px;font-family:'Liberation Sans', sans-serif;font-size:29px;line-height:29px;font-weight:400;white-space:pre;"><span style="color:#e8a03b">LaunchPipelineExecutionResult!</span></div>
<div style="position:absolute;left:1159.5px;top:1143.0px;width:0;height:0;border-top:7.0px solid transparent;border-bottom:7.0px solid transparent;border-left:12px solid #cbcbcb"></div>
<div style="position:absolute;left:653.0px;top:1220.8px;font-family:'Liberation Sans', sans-serif;font-size:29px;line-height:29px;font-weight:400;white-space:pre;"><span style="color:#e06058">launchPipelineReexecution</span><span style="color:#1f2633">(</span><span style="color:#1f2633;font-weight:700">...</span><span style="color:#1f2633">):</span></div>
<div style="position:absolute;left:653.0px;top:1263.2px;font-family:'Liberation Sans', sans-serif;font-size:29px;line-height:29px;font-weight:400;white-space:pre;"><span style="color:#e8a03b">LaunchPipelineReexecutionResult!</span></div>
<div style="position:absolute;left:1159.5px;top:1251.4px;width:0;height:0;border-top:7.0px solid transparent;border-bottom:7.0px solid transparent;border-left:12px solid #cbcbcb"></div>
<div style="position:absolute;left:653.0px;top:1328.2px;font-family:'Liberation Sans', sans-serif;font-size:29px;line-height:29px;font-weight:400;white-space:pre;"><span style="color:#e06058">reconcileSchedulerState</span><span style="color:#1f2633">(</span><span style="color:#1f2633;font-weight:700">...</span><span style="color:#1f2633">):</span></div>
<div style="position:absolute;left:653.0px;top:1370.6px;font-family:'Liberation Sans', sans-serif;font-size:29px;line-height:29px;font-weight:400;white-space:pre;"><span style="color:#e8a03b">ReconcileSchedulerStateMutationResult!</span></div>
<div style="position:absolute;left:1159.5px;top:1358.5px;width:0;height:0;border-top:7.0px solid transparent;border-bottom:7.0px solid transparent;border-left:12px solid #cbcbcb"></div>
<div style="position:absolute;left:653.0px;top:1450.1px;font-family:'Liberation Sans', sans-serif;font-size:29px;line-height:29px;font-weight:400;white-space:pre;"><span style="color:#e06058">startSchedule</span><span style="color:#1f2633">(</span><span style="color:#1f2633;font-weight:700">...</span><span style="color:#1f2633">):</span></div>
<div style="position:absolute;left:653.0px;top:1492.5px;font-family:'Liberation Sans', sans-serif;font-size:29px;line-height:29px;font-weight:400;white-space:pre;"><span style="color:#e8a03b">ScheduleMutationResult!</span></div>
<div style="position:absolute;left:1159.5px;top:1481.3px;width:0;height:0;border-top:7.0px solid transparent;border-bottom:7.0px solid transparent;border-left:12px solid #cbcbcb"></div>
<div style="position:absolute;left:653.0px;top:1558.0px;font-family:'Liberation Sans', sans-serif;font-size:29px;line-height:29px;font-weight:400;white-space:pre;"><span style="color:#e06058">stopRunningSchedule</span><span style="color:#1f2633">(</span><span style="color:#1f2633;font-weight:700">...</span><span style="color:#1f2633">):</span></div>
<div style="position:absolute;left:653.0px;top:1600.4px;font-family:'Liberation Sans', sans-serif;font-size:29px;line-height:29px;font-weight:400;white-space:pre;"><span style="color:#e8a03b">ScheduleMutationResult!</span></div>
<div style="position:absolute;left:1159.5px;top:1588.5px;width:0;height:0;border-top:7.0px solid transparent;border-bottom:7.0px solid transparent;border-left:12px solid #cbcbcb"></div>
<div style="position:absolute;left:653.0px;top:1665.8px;font-family:'Liberation Sans', sans-serif;font-size:29px;line-height:29px;font-weight:400;white-space:pre;"><span style="color:#e06058">terminatePipelineExecution</span><span style="color:#1f2633">(</span><span style="color:#1f2633;font-weight:700">...</span><span style="color:#1f2633">):</span></div>
<div style="position:absolute;left:653.0px;top:1708.2px;font-family:'Liberation Sans', sans-serif;font-size:29px;line-height:29px;font-weight:400;white-space:pre;"><span style="color:#e8a03b">TerminatePipelineExecutionResult!</span></div>
<div style="position:absolute;left:1159.5px;top:1696.5px;width:0;height:0;border-top:7.0px solid transparent;border-bottom:7.0px solid transparent;border-left:12px solid #cbcbcb"></div>
<div style="position:absolute;left:653.0px;top:1774.0px;font-family:'Liberation Sans', sans-serif;font-size:29px;line-height:29px;font-weight:400;white-space:pre;"><span style="color:#e06058">deletePipelineRun</span><span style="color:#1f2633">(</span><span style="color:#1f2633;font-weight:700">...</span><span style="color:#1f2633">):</span></div>
<div style="position:absolute;left:653.0px;top:1816.4px;font-family:'Liberation Sans', sans-serif;font-size:29px;line-height:29px;font-weight:400;white-space:pre;"><span style="color:#e8a03b">DeletePipelineRunResult!</span></div>
<div style="position:absolute;left:1159.5px;top:1804.5px;width:0;height:0;border-top:7.0px solid transparent;border-bottom:7.0px solid transparent;border-left:12px solid #cbcbcb"></div>
<div style="position:absolute;left:651.0px;top:1027.4px;font-family:'Liberation Sans', sans-serif;font-size:27.5px;line-height:27.5px;font-weight:700;white-space:pre;letter-spacing:2.16px"><span style="color:#b3b3b3">MUTATIONS</span></div>
<div style="position:absolute;left:674px;top:1418px;width:494px;height:14px;background:#c1c1c1;border-radius:7px"></div>
<div style="position:absolute;left:674px;top:539px;width:40px;height:1300px;background:linear-gradient(to right,#fff 0px,#fff 5px,rgba(255,255,255,0.55) 16px,rgba(255,255,255,0) 40px);"></div>
</div></div>
<div style="position:absolute;left:674px;top:348px;width:532px;height:191px;background:#f9f9f9;"></div>
<div style="position:absolute;left:674px;top:538px;width:532px;height:2px;background:#dfe0e0;"></div>
<div style="position:absolute;left:674px;top:398px;width:482px;height:90px;background:#fff;box-shadow:0 1px 4px rgba(0,0,0,0.08)"></div>
<svg style="position:absolute;left:696px;top:423px" width="40" height="40" viewBox="0 0 40 40">
<circle cx="15.2" cy="14.5" r="10.7" stroke="#a8a8a8" stroke-width="1.7" fill="none"/>
<path d="M22.6 22 L34.3 33.5" stroke="#a8a8a8" stroke-width="1.7"/></svg>
<div style="position:absolute;left:757.0px;top:427.1px;font-family:'Liberation Sans', sans-serif;font-size:31.5px;line-height:31.5px;font-weight:400;white-space:pre;"><span style="color:#adadad">Search the docs ...</span></div>
<div style="position:absolute;left:1192px;top:1144px;width:14px;height:436px;background:#c1c1c1;border-radius:7px"></div>
<div style="position:absolute;left:1206px;top:348px;width:2px;height:1518px;background:#e3e3e3;"></div>
<div style="position:absolute;left:1808px;top:348px;width:2px;height:1518px;background:#e3e3e3;"></div>
<div style="position:absolute;left:2410px;top:348px;width:2px;height:1518px;background:#e3e3e3;"></div>
<div style="position:absolute;left:1208px;top:348px;width:586px;height:252px;background:#f9f9f9;"></div>
<div style="position:absolute;left:1241.0px;top:405.8px;font-family:'Liberation Sans', sans-serif;font-size:29px;line-height:29px;font-weight:700;white-space:pre;"><span style="color:#e06058">launchPipelineExecution</span><span style="color:#1f2633">(</span></div>
<div style="position:absolute;left:1273.0px;top:447.4px;font-family:'Liberation Sans', sans-serif;font-size:29px;line-height:29px;font-weight:700;white-space:pre;"><span style="color:#2d5f9f">executionParams</span><span style="color:#1f2633">:</span></div>
<div style="position:absolute;left:1273.0px;top:489.7px;font-family:'Liberation Sans', sans-serif;font-size:29px;line-height:29px;font-weight:700;white-space:pre;"><span style="color:#e8a03b">ExecutionParams!</span></div>
<div style="position:absolute;left:1241.0px;top:531.2px;font-family:'Liberation Sans', sans-serif;font-size:29px;line-height:29px;font-weight:700;white-space:pre;"><span style="color:#1f2633">): </span><span style="color:#e8a03b">LaunchPipelineExecutionResult!</span></div>
<div style="position:absolute;left:1273.0px;top:637.8px;font-family:'Liberation Sans', sans-serif;font-size:29px;line-height:29px;font-weight:400;white-space:pre;"><span style="color:#8a8a8a">Launch a pipeline run via the run</span></div>
<div style="position:absolute;left:1273.0px;top:679.8px;font-family:'Liberation Sans', sans-serif;font-size:29px;line-height:29px;font-weight:400;white-space:pre;"><span style="color:#8a8a8a">launcher configured on the</span></div>
<div style="position:absolute;left:1273.0px;top:721.8px;font-family:'Liberation Sans', sans-serif;font-size:29px;line-height:29px;font-weight:400;white-space:pre;"><span style="color:#8a8a8a">instance.</span></div>
<div style="position:absolute;left:1241.0px;top:869.7px;font-family:'Liberation Sans', sans-serif;font-size:27.5px;line-height:27.5px;font-weight:700;white-space:pre;letter-spacing:2.16px"><span style="color:#b3b3b3">UNION DETAILS</span></div>
<div style="position:absolute;left:1241.0px;top:982.8px;font-family:'Liberation Sans', sans-serif;font-size:29px;line-height:29px;font-weight:400;white-space:pre;"><span style="color:#2d5f9f">union</span><span style="color:#1f2633"> </span><span style="color:#e8a03b">LaunchPipelineExecutionResult</span><span style="color:#1f2633"> =</span></div>
<div style="position:absolute;left:1273.0px;top:1036.1px;font-family:'Liberation Sans', sans-serif;font-size:29px;line-height:29px;font-weight:400;white-space:pre;"><span style="color:#e8a03b">LaunchPipelineRunSuccess</span></div>
<div style="position:absolute;left:1730.0px;top:1046.7px;width:0;height:0;border-top:7.0px solid transparent;border-bottom:7.0px solid transparent;border-left:12px solid #cbcbcb"></div>
<div style="position:absolute;left:1273.0px;top:1102.1px;font-family:'Liberation Sans', sans-serif;font-size:29px;line-height:29px;font-weight:400;white-space:pre;"><span style="color:#e8a03b">InvalidStepError</span></div>
<div style="position:absolute;left:1730.0px;top:1112.7px;width:0;height:0;border-top:7.0px solid transparent;border-bottom:7.0px solid transparent;border-left:12px solid #cbcbcb"></div>
<div style="position:absolute;left:1273.0px;top:1168.1px;font-family:'Liberation Sans', sans-serif;font-size:29px;line-height:29px;font-weight:400;white-space:pre;"><span style="color:#e8a03b">InvalidOutputError</span></div>
<div style="position:absolute;left:1730.0px;top:1178.7px;width:0;height:0;border-top:7.0px solid transparent;border-bottom:7.0px solid transparent;border-left:12px solid #cbcbcb"></div>
<div style="position:absolute;left:1273.0px;top:1234.1px;font-family:'Liberation Sans', sans-serif;font-size:29px;line-height:29px;font-weight:400;white-space:pre;"><span style="color:#e8a03b">PipelineConfigValidationInvalid</span></div>
<div style="position:absolute;left:1730.0px;top:1244.7px;width:0;height:0;border-top:7.0px solid transparent;border-bottom:7.0px solid transparent;border-left:12px solid #cbcbcb"></div>
<div style="position:absolute;left:1273.0px;top:1300.1px;font-family:'Liberation Sans', sans-serif;font-size:29px;line-height:29px;font-weight:400;white-space:pre;"><span style="color:#e8a03b">PipelineNotFoundError</span></div>
<div style="position:absolute;left:1730.0px;top:1310.7px;width:0;height:0;border-top:7.0px solid transparent;border-bottom:7.0px solid transparent;border-left:12px solid #cbcbcb"></div>
<div style="position:absolute;left:1273.0px;top:1366.1px;font-family:'Liberation Sans', sans-serif;font-size:29px;line-height:29px;font-weight:400;white-space:pre;"><span style="color:#e8a03b">PipelineRunConflict</span></div>
<div style="position:absolute;left:1730.0px;top:1376.7px;width:0;height:0;border-top:7.0px solid transparent;border-bottom:7.0px solid transparent;border-left:12px solid #cbcbcb"></div>
<div style="position:absolute;left:1273.0px;top:1432.1px;font-family:'Liberation Sans', sans-serif;font-size:29px;line-height:29px;font-weight:400;white-space:pre;"><span style="color:#e8a03b">PythonError</span></div>
<div style="position:absolute;left:1730.0px;top:1442.7px;width:0;height:0;border-top:7.0px solid transparent;border-bottom:7.0px solid transparent;border-left:12px solid #cbcbcb"></div>
<div style="position:absolute;left:1273.0px;top:1498.1px;font-family:'Liberation Sans', sans-serif;font-size:29px;line-height:29px;font-weight:400;white-space:pre;"><span style="color:#e8a03b">PresetNotFoundError</span></div>
<div style="position:absolute;left:1730.0px;top:1508.7px;width:0;height:0;border-top:7.0px solid transparent;border-bottom:7.0px solid transparent;border-left:12px solid #cbcbcb"></div>
<div style="position:absolute;left:1273.0px;top:1564.1px;font-family:'Liberation Sans', sans-serif;font-size:29px;line-height:29px;font-weight:400;white-space:pre;"><span style="color:#e8a03b">ConflictingExecutionParamsError</span></div>
<div style="position:absolute;left:1730.0px;top:1574.7px;width:0;height:0;border-top:7.0px solid transparent;border-bottom:7.0px solid transparent;border-left:12px solid #cbcbcb"></div>
<div style="position:absolute;left:1241.0px;top:1651.5px;font-family:'Liberation Sans', sans-serif;font-size:27.5px;line-height:27.5px;font-weight:700;white-space:pre;letter-spacing:2.16px"><span style="color:#b3b3b3">ARGUMENTS</span></div>
<div style="position:absolute;left:1208px;top:1718px;width:586px;height:66px;background:#ededed;"></div>
<div style="position:absolute;left:1241.0px;top:1735.9px;font-family:'Liberation Sans', sans-serif;font-size:29px;line-height:29px;font-weight:400;white-space:pre;"><span style="color:#2d5f9f">executionParams</span><span style="color:#1f2633">: </span><span style="color:#e8a03b">ExecutionParams!</span></div>
<div style="position:absolute;left:1761.0px;top:1746.6px;width:0;height:0;border-top:7.0px solid transparent;border-bottom:7.0px solid transparent;border-left:12px solid #cbcbcb"></div>
<div style="position:absolute;left:1810px;top:348px;width:586px;height:126px;background:#f9f9f9;"></div>
<div style="position:absolute;left:1842.0px;top:405.8px;font-family:'Liberation Sans', sans-serif;font-size:29px;line-height:29px;font-weight:700;white-space:pre;"><span style="color:#e06058">executionParams</span><span style="color:#1f2633">: </span><span style="color:#e8a03b">ExecutionParams!</span></div>
<div style="position:absolute;left:1842.0px;top:513.5px;font-family:'Liberation Sans', sans-serif;font-size:27.5px;line-height:27.5px;font-weight:700;white-space:pre;letter-spacing:2.16px"><span style="color:#b3b3b3">TYPE DETAILS</span></div>
<div style="position:absolute;left:1842.0px;top:597.7px;font-family:'Liberation Sans', sans-serif;font-size:29px;line-height:29px;font-weight:400;white-space:pre;"><span style="color:#2d5f9f">type</span><span style="color:#1f2633"> </span><span style="color:#e06058">ExecutionParams</span><span style="color:#7f868e"> {</span></div>
<div style="position:absolute;left:1810px;top:844px;width:586px;height:107.5px;background:#ededed;"></div>
<div style="position:absolute;left:1874.0px;top:663.7px;font-family:'Liberation Sans', sans-serif;font-size:29px;line-height:29px;font-weight:400;white-space:pre;"><span style="color:#2d5f9f">selector</span><span style="color:#1f2633">: </span><span style="color:#e8a03b">PipelineSelector!</span></div>
<div style="position:absolute;left:2364.0px;top:674.6px;width:0;height:0;border-top:7.0px solid transparent;border-bottom:7.0px solid transparent;border-left:12px solid #cbcbcb"></div>
<div style="position:absolute;left:1874.0px;top:730.1px;font-family:'Liberation Sans', sans-serif;font-size:29px;line-height:29px;font-weight:400;white-space:pre;"><span style="color:#2d5f9f">runConfigData</span><span style="color:#1f2633">: </span><span style="color:#e8a03b">RunConfigData</span></div>
<div style="position:absolute;left:2364.0px;top:741.0px;width:0;height:0;border-top:7.0px solid transparent;border-bottom:7.0px solid transparent;border-left:12px solid #cbcbcb"></div>
<div style="position:absolute;left:1874.0px;top:796.1px;font-family:'Liberation Sans', sans-serif;font-size:29px;line-height:29px;font-weight:400;white-space:pre;"><span style="color:#2d5f9f">mode</span><span style="color:#1f2633">: </span><span style="color:#e8a03b">String</span></div>
<div style="position:absolute;left:2364.0px;top:807.0px;width:0;height:0;border-top:7.0px solid transparent;border-bottom:7.0px solid transparent;border-left:12px solid #cbcbcb"></div>
<div style="position:absolute;left:1874.0px;top:862.0px;font-family:'Liberation Sans', sans-serif;font-size:29px;line-height:29px;font-weight:400;white-space:pre;"><span style="color:#2d5f9f">executionMetadata</span><span style="color:#1f2633">:</span></div>
<div style="position:absolute;left:1874.0px;top:904.5px;font-family:'Liberation Sans', sans-serif;font-size:29px;line-height:29px;font-weight:400;white-space:pre;"><span style="color:#e8a03b">ExecutionMetadata</span></div>
<div style="position:absolute;left:2364.0px;top:892.8px;width:0;height:0;border-top:7.0px solid transparent;border-bottom:7.0px solid transparent;border-left:12px solid #cbcbcb"></div>
<div style="position:absolute;left:1874.0px;top:970.1px;font-family:'Liberation Sans', sans-serif;font-size:29px;line-height:29px;font-weight:400;white-space:pre;"><span style="color:#2d5f9f">stepKeys</span><span style="color:#1f2633">: </span><span style="color:#e8a03b">[String!]</span></div>
<div style="position:absolute;left:2364.0px;top:981.0px;width:0;height:0;border-top:7.0px solid transparent;border-bottom:7.0px solid transparent;border-left:12px solid #cbcbcb"></div>
<div style="position:absolute;left:1874.0px;top:1035.6px;font-family:'Liberation Sans', sans-serif;font-size:29px;line-height:29px;font-weight:400;white-space:pre;"><span style="color:#2d5f9f">preset</span><span style="color:#1f2633">: </span><span style="color:#e8a03b">String</span></div>
<div style="position:absolute;left:2364.0px;top:1046.6px;width:0;height:0;border-top:7.0px solid transparent;border-bottom:7.0px solid transparent;border-left:12px solid #cbcbcb"></div>
<div style="position:absolute;left:1842.0px;top:1097.6px;font-family:'Liberation Sans', sans-serif;font-size:29px;line-height:29px;font-weight:400;white-space:pre;"><span style="color:#7f868e">}</span></div>
<div style="position:absolute;left:2412px;top:348px;width:586px;height:168px;background:#f9f9f9;"></div>
<div style="position:absolute;left:2444.0px;top:406.6px;font-family:'Liberation Sans', sans-serif;font-size:29px;line-height:29px;font-weight:700;white-space:pre;"><span style="color:#e06058">executionMetadata</span><span style="color:#1f2633">:</span></div>
<div style="position:absolute;left:2444.0px;top:447.5px;font-family:'Liberation Sans', sans-serif;font-size:29px;line-height:29px;font-weight:700;white-space:pre;"><span style="color:#e8a03b">ExecutionMetadata</span></div>
<div style="position:absolute;left:2444.0px;top:555.2px;font-family:'Liberation Sans', sans-serif;font-size:27.5px;line-height:27.5px;font-weight:700;white-space:pre;letter-spacing:2.16px"><span style="color:#b3b3b3">TYPE DETAILS</span></div>
<div style="position:absolute;left:2444.0px;top:641.0px;font-family:'Liberation Sans', sans-serif;font-size:29px;line-height:29px;font-weight:400;white-space:pre;"><span style="color:#2d5f9f">type</span><span style="color:#1f2633"> </span><span style="color:#e06058">ExecutionMetadata</span><span style="color:#7f868e"> {</span></div>
<div style="position:absolute;left:2477.0px;top:705.7px;font-family:'Liberation Sans', sans-serif;font-size:29px;line-height:29px;font-weight:400;white-space:pre;"><span style="color:#2d5f9f">runId</span><span style="color:#1f2633">: </span><span style="color:#e8a03b">String</span></div>
<div style="position:absolute;left:2966.0px;top:716.6px;width:0;height:0;border-top:7.0px solid transparent;border-bottom:7.0px solid transparent;border-left:12px solid #cbcbcb"></div>
<div style="position:absolute;left:2477.0px;top:771.7px;font-family:'Liberation Sans', sans-serif;font-size:29px;line-height:29px;font-weight:400;white-space:pre;"><span style="color:#2d5f9f">tags</span><span style="color:#1f2633">: </span><span style="color:#e8a03b">[ExecutionTag!]</span></div>
<div style="position:absolute;left:2966.0px;top:782.6px;width:0;height:0;border-top:7.0px solid transparent;border-bottom:7.0px solid transparent;border-left:12px solid #cbcbcb"></div>
<div style="position:absolute;left:2477.0px;top:837.7px;font-family:'Liberation Sans', sans-serif;font-size:29px;line-height:29px;font-weight:400;white-space:pre;"><span style="color:#2d5f9f">rootRunId</span><span style="color:#1f2633">: </span><span style="color:#e8a03b">String</span></div>
<div style="position:absolute;left:2966.0px;top:848.6px;width:0;height:0;border-top:7.0px solid transparent;border-bottom:7.0px solid transparent;border-left:12px solid #cbcbcb"></div>
<div style="position:absolute;left:2477.0px;top:903.7px;font-family:'Liberation Sans', sans-serif;font-size:29px;line-height:29px;font-weight:400;white-space:pre;"><span style="color:#2d5f9f">parentRunId</span><span style="color:#1f2633">: </span><span style="color:#e8a03b">String</span></div>
<div style="position:absolute;left:2966.0px;top:914.6px;width:0;height:0;border-top:7.0px solid transparent;border-bottom:7.0px solid transparent;border-left:12px solid #cbcbcb"></div>
<div style="position:absolute;left:2444.0px;top:971.5px;font-family:'Liberation Sans', sans-serif;font-size:29px;line-height:29px;font-weight:400;white-space:pre;"><span style="color:#7f868e">}</span></div>
<div style="position:absolute;left:714px;top:1866px;width:2296px;height:14px;background:#c1c1c1;border-radius:7px"></div>
</div></div>
<div style="position:absolute;left:112px;top:76px;width:2898px;height:1804px;border-radius:10px;box-sizing:border-box;border:2px solid rgba(255,255,255,0.26);border-top-color:rgba(255,255,255,0.38);pointer-events:none"></div>
</body></html>
